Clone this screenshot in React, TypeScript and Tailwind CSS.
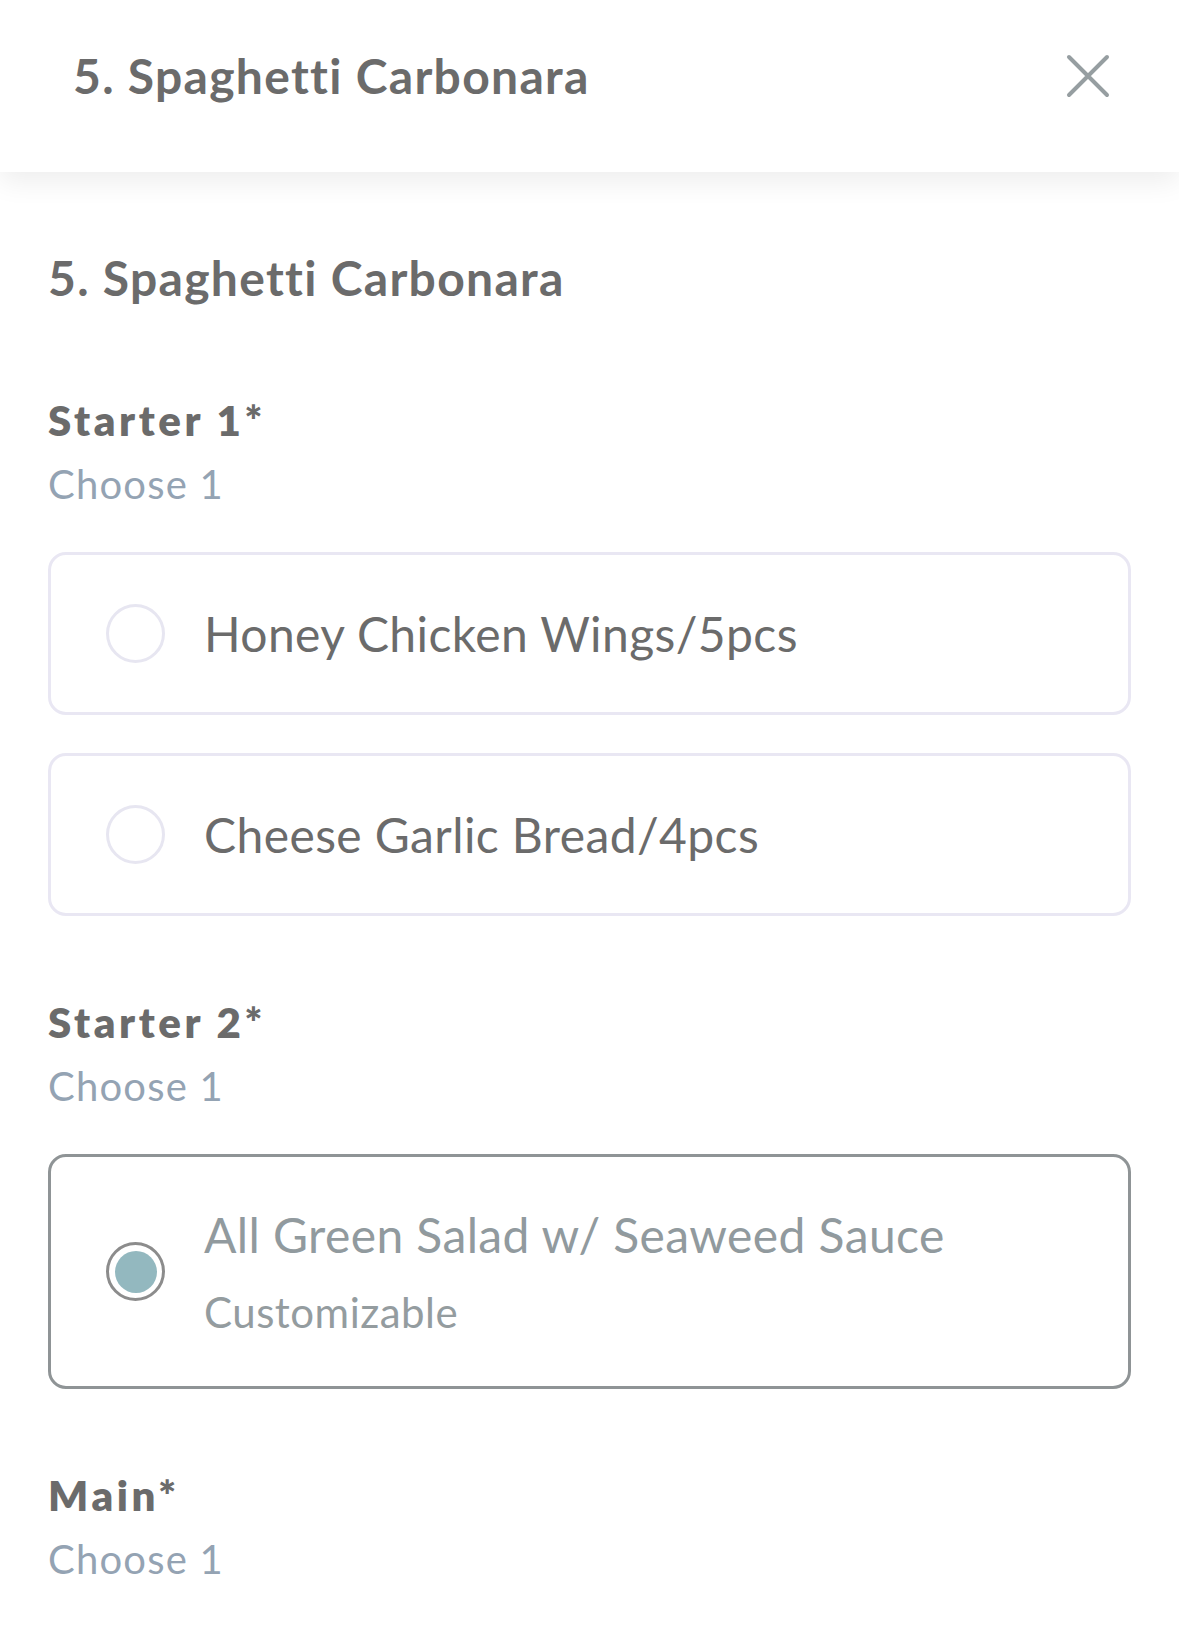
import React, { useState } from 'react';

type Option = { id: string; name: string; note?: string };
type Group = { id: string; title: string; options: Option[] };

const groups: Group[] = [
  {
    id: 'starter1',
    title: 'Starter 1*',
    options: [
      { id: 'wings', name: 'Honey Chicken Wings/5pcs' },
      { id: 'bread', name: 'Cheese Garlic Bread/4pcs' },
    ],
  },
  {
    id: 'starter2',
    title: 'Starter 2*',
    options: [{ id: 'salad', name: 'All Green Salad w/ Seaweed Sauce', note: 'Customizable' }],
  },
  { id: 'main', title: 'Main*', options: [] },
];

const font = { fontFamily: 'Lato, "Open Sans", sans-serif' };

const CloseIcon = () => (
  <svg width="44" height="44" viewBox="0 0 44 44" fill="none" stroke="#969ea1" strokeWidth="4" strokeLinecap="round">
    <path d="M3 3 L41 41 M41 3 L3 41" />
  </svg>
);

const OptionCard: React.FC<{ option: Option; selected: boolean; onSelect: () => void }> = ({
  option,
  selected,
  onSelect,
}) => (
  <button
    onClick={onSelect}
    className={`flex w-full items-center rounded-[18px] border-[3px] bg-white pl-[55px] text-left ${
      selected ? 'border-[#8f9496] h-[235px]' : 'border-[#e9e7f3] h-[163px]'
    }`}
  >
    <span
      className={`flex h-[59px] w-[59px] shrink-0 items-center justify-center rounded-full border-[3px] ${
        selected ? 'border-[#8c8c8c]' : 'border-[#e7e6f1]'
      }`}
    >
      {selected && <span className="h-[42px] w-[42px] rounded-full bg-[#93b8bf]" />}
    </span>
    <span className="ml-[39px] flex flex-col">
      <span
        className={`text-[48px] leading-none tracking-[0.4px] ${selected ? 'text-[#919a9e]' : 'text-[#6b6b6b]'}`}
      >
        {option.name}
      </span>
      {option.note && (
        <span className="mt-[32px] text-[42px] leading-none tracking-[0.5px] text-[#949c9f]">{option.note}</span>
      )}
    </span>
  </button>
);

export default function App() {
  const [picked, setPicked] = useState<Record<string, string>>({ starter2: 'salad' });

  return (
    <div className="min-h-[1630px] w-full overflow-hidden bg-white" style={font}>
      <header className="relative z-10 flex h-[172px] items-center justify-between bg-white pb-[20px] pl-[73px] pr-[69px] shadow-[0_10px_26px_rgba(0,0,0,0.07)]">
        <h1 className="text-[48px] font-bold leading-none tracking-[1.3px] text-[#6b6b6b]">5. Spaghetti Carbonara</h1>
        <CloseIcon />
      </header>

      <main className="px-[48px] pt-[82px]">
        <h2 className="text-[48px] font-bold leading-none tracking-[1.3px] text-[#6b6b6b]">5. Spaghetti Carbonara</h2>

        {groups.map((g, i) => (
          <section key={g.id} className={i === 0 ? 'mt-[97px]' : 'mt-[85px]'}>
            <h3 className="text-[42px] font-extrabold leading-none tracking-[3.6px] text-[#6b6b6b]">{g.title}</h3>
            <p className="mt-[23px] text-[40px] leading-none tracking-[1.2px] text-[#94a3b3]">Choose 1</p>
            {g.options.length > 0 && (
              <div className="mt-[48px] flex flex-col gap-[38px]">
                {g.options.map((o) => (
                  <OptionCard
                    key={o.id}
                    option={o}
                    selected={picked[g.id] === o.id}
                    onSelect={() => setPicked({ ...picked, [g.id]: o.id })}
                  />
                ))}
              </div>
            )}
          </section>
        ))}
      </main>
    </div>
  );
}
